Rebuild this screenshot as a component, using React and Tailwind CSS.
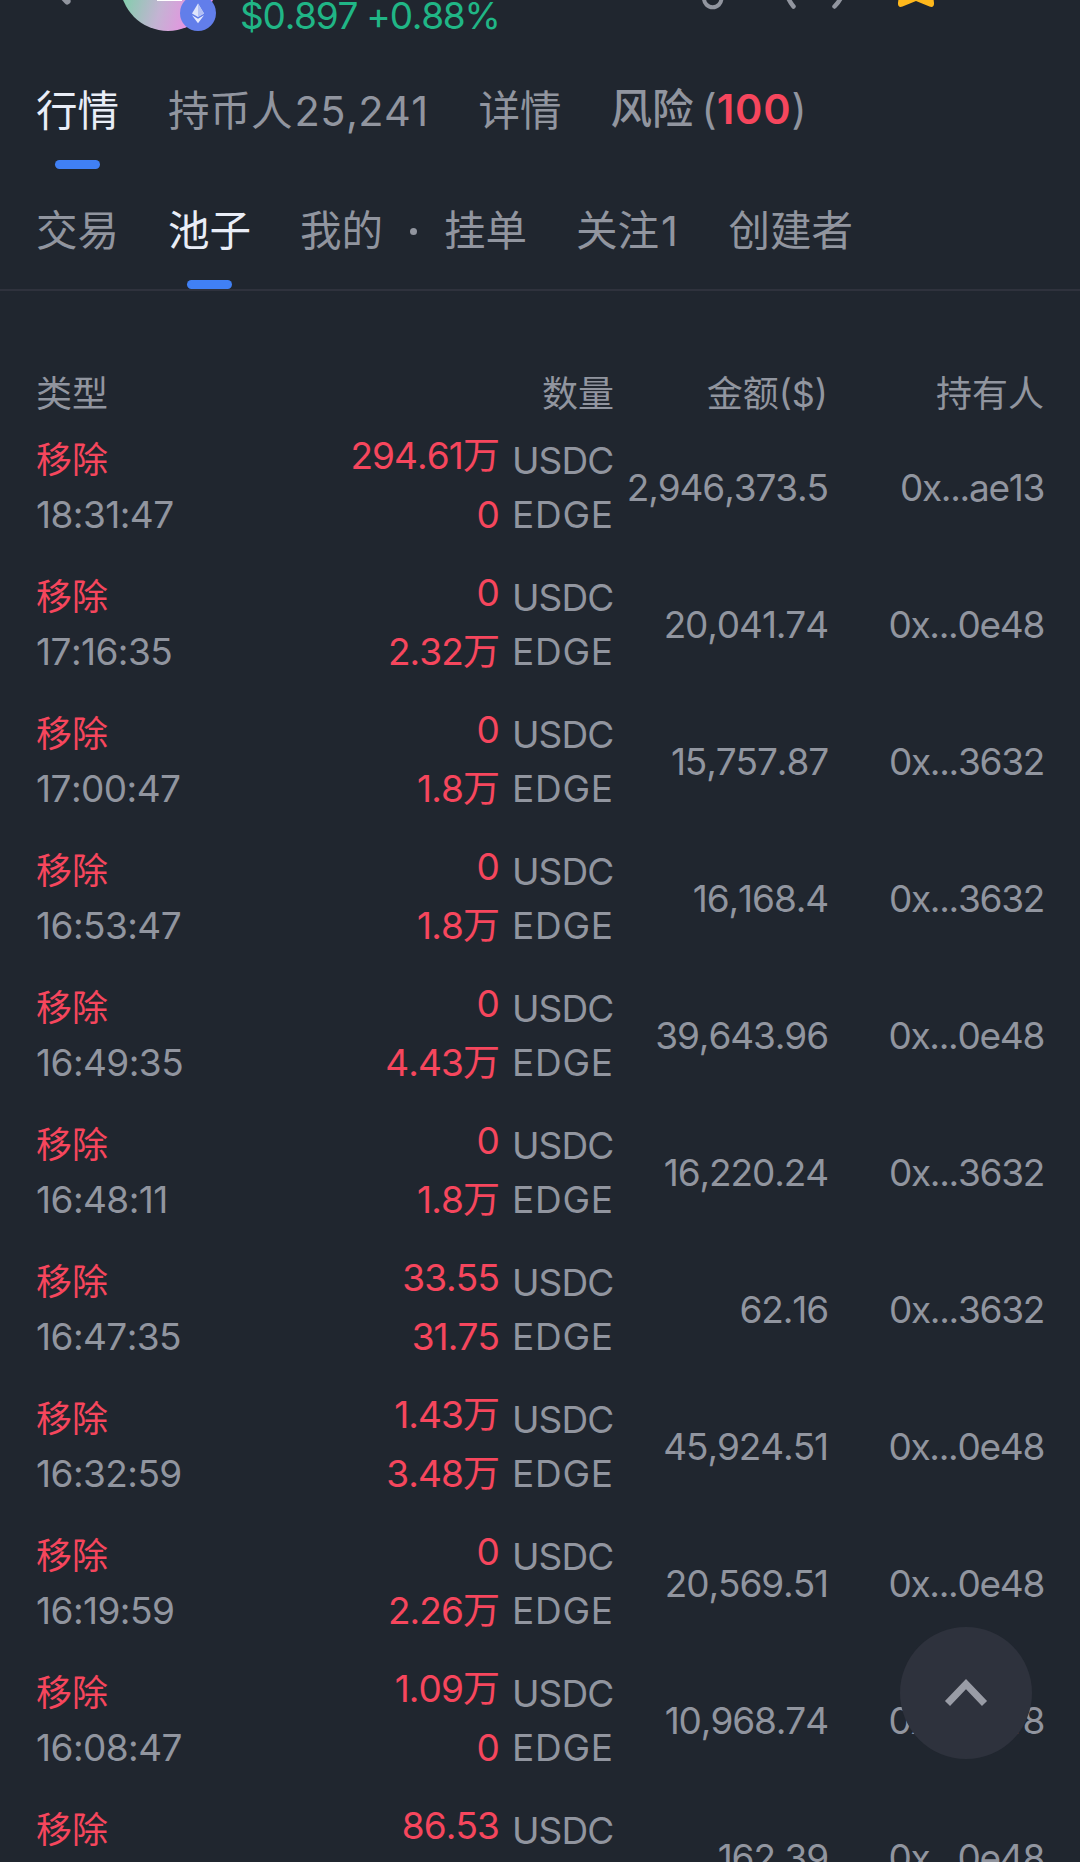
import { useState } from 'react';
import clsx from 'clsx';

const mainTabs = [
  { id: 'market', label: '行情' },
  { id: 'holders', label: '持币人', count: '25,241' },
  { id: 'detail', label: '详情' },
  { id: 'risk', label: '风险', risk: '100' },
];

const subTabs = [
  { id: 'trades', label: '交易' },
  { id: 'pool', label: '池子' },
  { id: 'mine', label: '我的' },
  { id: 'orders', label: '挂单', dot: true },
  { id: 'follow', label: '关注', count: '1' },
  { id: 'creator', label: '创建者' },
];

const records = [
  { time: '18:31:47', usdc: '294.61万', edge: '0', amount: '2,946,373.5', holder: '0x...ae13' },
  { time: '17:16:35', usdc: '0', edge: '2.32万', amount: '20,041.74', holder: '0x...0e48' },
  { time: '17:00:47', usdc: '0', edge: '1.8万', amount: '15,757.87', holder: '0x...3632' },
  { time: '16:53:47', usdc: '0', edge: '1.8万', amount: '16,168.4', holder: '0x...3632' },
  { time: '16:49:35', usdc: '0', edge: '4.43万', amount: '39,643.96', holder: '0x...0e48' },
  { time: '16:48:11', usdc: '0', edge: '1.8万', amount: '16,220.24', holder: '0x...3632' },
  { time: '16:47:35', usdc: '33.55', edge: '31.75', amount: '62.16', holder: '0x...3632' },
  { time: '16:32:59', usdc: '1.43万', edge: '3.48万', amount: '45,924.51', holder: '0x...0e48' },
  { time: '16:19:59', usdc: '0', edge: '2.26万', amount: '20,569.51', holder: '0x...0e48' },
  { time: '16:08:47', usdc: '1.09万', edge: '0', amount: '10,968.74', holder: '0x...0e48' },
  { time: '', usdc: '86.53', edge: '', amount: '162.39', holder: '0x...0e48' },
];

function Header() {
  return (
    <header className="flex h-[81px] items-start pl-9 pr-[138px] text-[#91959f]">
      <svg width="40" height="40" viewBox="0 0 40 40" fill="none" stroke="currentColor" strokeWidth="6.5" strokeLinecap="round">
        <path d="M12-19 31.3 1.2" />
      </svg>
      <svg className="ml-10" width="110" height="40" viewBox="0 0 110 40">
        <defs>
          <linearGradient id="token" x1="0" y1="0.35" x2="1" y2="0.65">
            <stop offset="0" stopColor="#6fd6a0" />
            <stop offset="0.5" stopColor="#c4b3d3" />
            <stop offset="0.85" stopColor="#ea8fe2" />
          </linearGradient>
        </defs>
        <circle cx="52" cy="-17" r="48" fill="url(#token)" />
        <rect x="41" y="-4" width="25" height="5" fill="#fff" />
        <circle cx="82" cy="13" r="18" fill="#627eea" />
        <path d="M82 3.5 76 13.6l6 3.4 6-3.4z" fill="#dfe5fb" />
        <path d="M82 3.5v13.5l6-3.4z" fill="#b4c1f5" />
        <path d="m76 15.2 6 8 6-8-6 3.5z" fill="#e6eafc" />
      </svg>
      <span className="ml-3.5 text-[37px] leading-8 tracking-[-0.033em] text-[#20b686]">$0.897 +0.88%</span>
      <div className="ml-auto flex">
        <svg width="36" height="40" viewBox="0 0 36 40" fill="none" stroke="currentColor" strokeWidth="4">
          <path d="M9-4v2.6a8.7 8.7 0 0 0 17.4 0V-4" />
        </svg>
        <svg className="ml-[49px]" width="70" height="40" viewBox="0 0 70 40" fill="none" stroke="currentColor" strokeWidth="4.5" strokeLinecap="round">
          <path d="M7-5q2 6 6.5 11.5M62-5q-2 6-7.5 11.5" />
        </svg>
        <svg className="ml-10" width="52" height="40" viewBox="0 0 52 40" fill="#ffb81c">
          <path d="M9.5-10 8 3q-.3 5 4.5 3.6L26 1l13.5 5.6q4.8 1.4 4.5-3.6L42.5-10z" />
        </svg>
      </div>
    </header>
  );
}

function Tab({ tab, active, onClick }) {
  return (
    <button
      onClick={onClick}
      className={clsx(
        'flex flex-col items-center text-[41.5px] leading-[60px]',
        active ? 'text-[#e9edf7]' : 'text-[#91959f]'
      )}
    >
      <span className={clsx('flex whitespace-nowrap', tab.risk && '-mt-0.5 mb-0.5 font-medium')}>
        {tab.label}
        {tab.count && <span className="ml-0.5 mr-px tracking-[0.01em]">{tab.count}</span>}
        {tab.risk && (
          <span className="ml-2 font-normal">
            (<span className="font-semibold tracking-[0.02em] text-[#f6465d]">{tab.risk}</span>)
          </span>
        )}
      </span>
      <span className={clsx('mt-[19px] h-[9px] w-[45px] rounded-full', active && 'bg-[#4080f5]')} />
    </button>
  );
}

function TabBar({ tabs, value, onChange, className }) {
  return (
    <nav className={clsx('flex px-9', className)}>
      {tabs.map((tab, i) => (
        <div key={tab.id} className={clsx('flex', i > 0 && !tab.dot && 'ml-[49px]')}>
          {tab.dot && (
            <span className="flex h-[60px] w-[61px] items-center justify-center">
              <span className="size-[7px] rounded-full bg-[#91959f]" />
            </span>
          )}
          <Tab tab={tab} active={value === tab.id} onClick={() => onChange(tab.id)} />
        </div>
      ))}
    </nav>
  );
}

const columns = 'grid grid-cols-[200px_378px_214px_216px] px-9';

function Record({ record }) {
  return (
    <li className={clsx(columns, 'h-[137px] items-center text-[37px] leading-[54px] tracking-tight text-[#91959f]')}>
      <div>
        <p className="text-4xl leading-[53px] tracking-normal text-[#f6465d]">移除</p>
        <p className="mt-px h-[54px] tracking-[-0.015em]">{record.time}</p>
      </div>
      <div className="grid grid-cols-[263px_102px] grid-rows-[54px_54px] gap-x-[13px]">
        <span className="-mt-[5px] text-right text-[#f6465d]">{record.usdc}</span>
        <span>USDC</span>
        <span className="text-right text-[#f6465d]">{record.edge}</span>
        {record.edge && <span className="tracking-[0.02em]">EDGE</span>}
      </div>
      <span className="text-right tracking-[-0.03em]">{record.amount}</span>
      <span className="text-right tracking-[-0.035em]">{record.holder}</span>
    </li>
  );
}

export default function App() {
  const [mainTab, setMainTab] = useState('market');
  const [subTab, setSubTab] = useState('pool');

  return (
    <div className="h-[1862px] w-[1080px] overflow-hidden bg-[#20262f] font-['Inter','Noto_Sans_CJK_SC',sans-serif] [font-kerning:none]">
      <Header />
      <TabBar tabs={mainTabs} value={mainTab} onChange={setMainTab} />
      <TabBar tabs={subTabs} value={subTab} onChange={setSubTab} className="mt-8 border-b-2 border-[#2f323d]" />

      <div className={clsx(columns, 'mt-[76px] text-4xl leading-[54px] text-[#91959f]')}>
        <span>类型</span>
        <span className="text-right">数量</span>
        <span className="text-right">金额($)</span>
        <span className="text-right">持有人</span>
      </div>
      <ul className="-mt-0.5">
        {records.map((record, i) => (
          <Record key={i} record={record} />
        ))}
      </ul>

      <button
        onClick={() => window.scrollTo({ top: 0, behavior: 'smooth' })}
        className="fixed top-[1627px] left-[900px] flex size-[132px] items-center justify-center rounded-full bg-[#2e323d] text-[#999ca6]"
      >
        <svg width="44" height="32" viewBox="0 0 44 32" fill="none" stroke="currentColor" strokeWidth="7">
          <path d="M3.5 26.5 22 7l18.5 19.5" />
        </svg>
      </button>
    </div>
  );
}
